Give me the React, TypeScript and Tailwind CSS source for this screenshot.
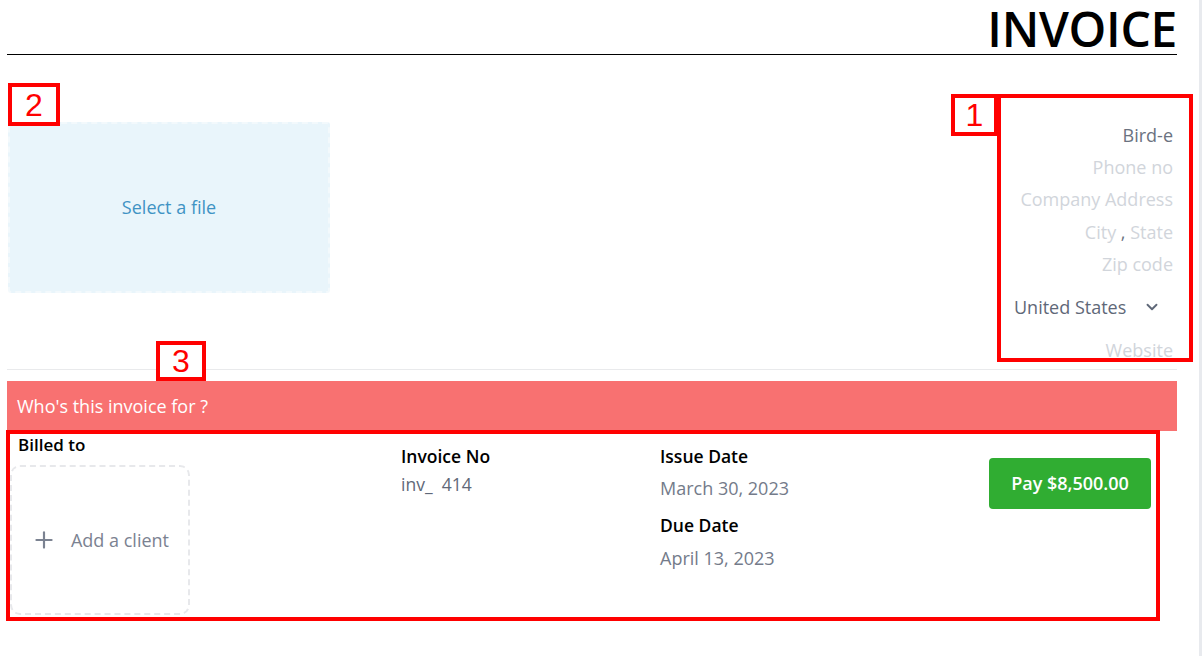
import { Plus, ChevronDown } from 'lucide-react'

const Annot = ({ n, className }: { n: string; className: string }) => (
  <div
    className={`absolute flex items-center justify-center border-4 border-[#ff0000] bg-white text-[32px] leading-none text-[#ff0000] font-['Liberation_Sans',sans-serif] ${className}`}
  >
    {n}
  </div>
)

export default function App() {
  return (
    <div className="relative min-h-[656px] w-[1202px] overflow-hidden bg-white font-['Open_Sans',sans-serif]">
      <div className="min-h-[656px] border-r-[3px] border-[#e8eaee]">
        <div className="ml-[7px] w-[1170px]">
          {/* Header */}
          <div className="flex h-[55px] items-end justify-end border-b border-black">
            <h1 className="text-[48px] font-semibold leading-[50px] tracking-[-0.3px] text-black">INVOICE</h1>
          </div>

          {/* Logo + company */}
          <div className="mt-[64px] flex justify-between">
            <div className="ml-px mt-[3px] flex h-[171px] w-[322px] items-center justify-center rounded-[3px] border-2 border-dashed border-[#f3f9fc] bg-[#e9f5fb]">
              <span className="text-[18px] text-[#3f93c4]">Select a file</span>
            </div>
            <div className="mr-[4px] flex flex-col items-end text-[18px] leading-[32px] text-[#d1d5db]">
              <div className="text-[#6b7280]">Bird-e</div>
              <div>Phone no</div>
              <div>Company Address</div>
              <div className="mt-px">
                City <span className="text-[#6b7280]">,</span> State
              </div>
              <div>Zip code</div>
              <div className="my-[8px] flex h-[38px] w-[168px] items-center justify-between pl-[9px] pr-[12px] text-[#5f6878]">
                <span>United States</span>
                <ChevronDown className="h-[18px] w-[18px]" strokeWidth={2.5} />
              </div>
              <div>Website</div>
            </div>
          </div>

          <div className="mt-[3px] border-t border-[#e9eaec]" />

          {/* Banner */}
          <div className="mt-[11px] flex h-[50px] items-center bg-[#f87171] pl-[10px] text-[18px] text-white">
            Who's this invoice for ?
          </div>

          {/* Details */}
          <div className="flex">
            <div className="w-[394px] pl-[3px]">
              <div className="pl-[8px] text-[17px] font-semibold leading-[28px] text-black">Billed to</div>
              <div className="mt-[6px] flex h-[150px] w-[180px] items-center justify-center gap-[14px] rounded-[10px] border-2 border-dashed border-[#e7e8eb] text-[18px] text-[#7b8291]">
                <Plus className="h-[26px] w-[26px]" strokeWidth={2} />
                <span>Add a client</span>
              </div>
            </div>
            <div className="w-[259px] pt-[11px] leading-[28px]">
              <div className="text-[17.5px] font-semibold text-black">Invoice No</div>
              <div className="text-[17.5px] text-[#5f6878]">
                inv_&nbsp;&nbsp;414
              </div>
            </div>
            <div className="pt-[11px]">
              <div className="text-[17.5px] font-semibold leading-[28px] text-black">Issue Date</div>
              <div className="mt-[2px] text-[18px] leading-[32px] text-[#747b8a]">March 30, 2023</div>
              <div className="mt-[7px] text-[17.5px] font-semibold leading-[28px] text-black">Due Date</div>
              <div className="mt-[3px] text-[18px] leading-[32px] text-[#747b8a]">April 13, 2023</div>
            </div>
            <div className="ml-auto mr-[26px] pt-[27px]">
              <button className="flex h-[51px] w-[162px] items-center justify-center rounded-[4px] bg-[#30ad32] text-[18px] font-semibold text-white">
                Pay $8,500.00
              </button>
            </div>
          </div>
        </div>
      </div>

      {/* Annotation overlays */}
      <div className="absolute left-[997px] top-[94px] h-[268px] w-[196px] border-4 border-[#ff0000]" />
      <Annot n="1" className="left-[951px] top-[94px] h-[42px] w-[47px]" />
      <Annot n="2" className="left-[8px] top-[83px] h-[43px] w-[52px]" />
      <Annot n="3" className="left-[156px] top-[341px] h-[40px] w-[50px]" />
      <div className="absolute left-[6px] top-[430px] h-[191px] w-[1154px] border-4 border-[#ff0000]" />
    </div>
  )
}
